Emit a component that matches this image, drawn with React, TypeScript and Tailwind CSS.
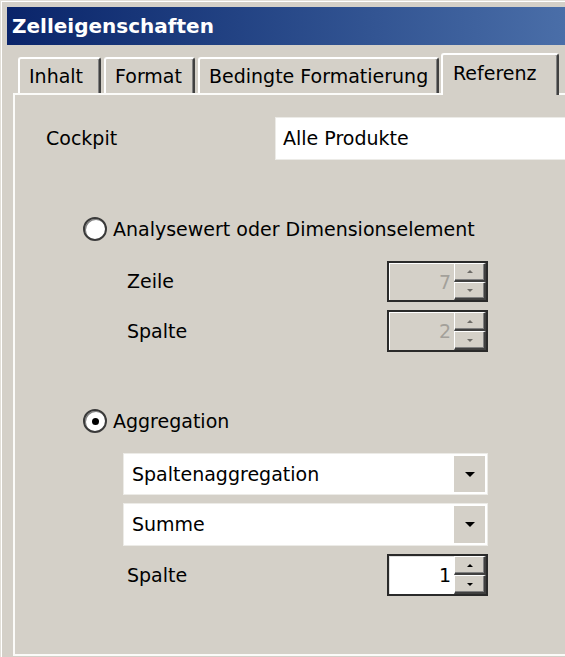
import type { FC, ReactNode } from 'react';
import { clsx } from 'clsx';

const Tab: FC<{ label: string; className: string; selected?: boolean }> = ({ label, className, selected }) => (
	<div
		className={clsx(
			'flex items-center rounded-t-[3px] border-l-2 border-r-2 border-t-2 border-l-white border-r-[#404040] border-t-white bg-[#d4d0c8] pl-[9px] shadow-[inset_-1px_0_0_#808080]',
			selected ? 'relative z-10 -mb-[2px] h-[42px] pb-[4px] pl-[10px]' : 'h-[36px]',
			className,
		)}
	>
		{label}
	</div>
);

const Radio: FC<{ checked?: boolean; children: ReactNode }> = ({ checked, children }) => (
	<div className="flex h-[24px] items-center">
		<div className="ml-[68px] flex size-[24px] items-center justify-center rounded-full border-2 border-[#3a3a3a] bg-white shadow-[inset_1px_1px_0_#808080]">
			{checked && <div className="size-[7px] rounded-full bg-black" />}
		</div>
		<span className="ml-[6px]">{children}</span>
	</div>
);

const SpinButton: FC<{ up?: boolean; disabled?: boolean }> = ({ up, disabled }) => (
	<div className="flex flex-1 items-center justify-center border-l border-t border-white border-b-2 border-r-2 border-b-[#404040] border-r-[#404040] bg-[#d4d0c8] shadow-[inset_-1px_-1px_0_#808080]">
		<div
			className={clsx(
				'border-x-[3px] border-x-transparent',
				up ? 'border-b-[3px]' : 'border-t-[3px]',
				up && (disabled ? 'border-b-[#6e6c68]' : 'border-b-black'),
				!up && (disabled ? 'border-t-[#6e6c68]' : 'border-t-black'),
			)}
		/>
	</div>
);

const SpinBox: FC<{ value: string; disabled?: boolean }> = ({ value, disabled }) => (
	<div className="flex h-full w-[101px] border-2 border-[#2a2a2a]">
		<div
			className={clsx(
				'flex flex-1 items-center justify-end border-l border-t pr-[3px]',
				disabled ? 'border-white bg-[#d4d0c8] text-[#a3a09a]' : 'border-[#e0e0e0] bg-white text-black',
			)}
		>
			{value}
		</div>
		<div className="flex w-[32px] flex-col bg-[#d4d0c8]">
			<SpinButton up disabled={disabled} />
			<SpinButton disabled={disabled} />
		</div>
	</div>
);

const Combo: FC<{ value: string }> = ({ value }) => (
	<div className="ml-[108px] flex h-full w-[365px] border border-[#ecebe7] bg-white p-[2px]">
		<div className="flex flex-1 items-center pl-[6px]">{value}</div>
		<div className="flex w-[31px] items-center justify-center bg-[#d4d0c8]">
			<div className="border-x-[5px] border-t-[5px] border-x-transparent border-t-black" />
		</div>
	</div>
);

const LabelRow: FC<{ label: string; value: string; disabled?: boolean; className: string }> = ({ label, value, disabled, className }) => (
	<div className={clsx('flex items-center', className)}>
		<span className="ml-[112px] w-[260px]">{label}</span>
		<SpinBox value={value} disabled={disabled} />
	</div>
);

export default function App() {
	return (
		<div className="h-[657px] w-[565px] overflow-hidden border-l border-t border-[#e2dfd8] bg-[#d4d0c8] font-['DejaVu_Sans',sans-serif] text-[19px] leading-none text-black">
			<div className="flex h-full flex-col border-l border-t border-white pb-[1px] pt-[5px]">
				<div className="ml-[5px] flex h-[38px] items-center bg-gradient-to-r from-[#0a246a] to-[#4a6ea8] pl-[5px] text-[20px] font-bold text-white">
					Zelleigenschaften
				</div>

				<div className="ml-[11px] mt-[8px] flex items-end">
					<Tab label="Inhalt" className="ml-[5px] w-[83px]" />
					<Tab label="Format" className="ml-[3px] w-[91px]" />
					<Tab label="Bedingte Formatierung" className="ml-[3px] w-[241px]" />
					<Tab label="Referenz" className="ml-[2px] w-[118px]" selected />
				</div>

				<div className="ml-[11px] flex w-[640px] flex-1 flex-col border-b-2 border-l-2 border-t-2 border-[#fbfbf9] pt-[22px]">
					<div className="flex h-[43px] items-center">
						<span className="ml-[31px] w-[229px]">Cockpit</span>
						<div className="flex h-full w-[320px] items-center border border-[#ecebe7] bg-white pl-[7px]">Alle Produkte</div>
					</div>

					<div className="mt-[57px]">
						<Radio>Analysewert oder Dimensionselement</Radio>
					</div>
					<LabelRow label="Zeile" value="7" disabled className="mt-[20px] h-[41px]" />
					<LabelRow label="Spalte" value="2" disabled className="mt-[8px] h-[42px]" />

					<div className="mt-[57px]">
						<Radio checked>Aggregation</Radio>
					</div>
					<div className="mt-[20px] h-[42px]">
						<Combo value="Spaltenaggregation" />
					</div>
					<div className="mt-[8px] h-[43px]">
						<Combo value="Summe" />
					</div>
					<LabelRow label="Spalte" value="1" className="mt-[8px] h-[42px]" />
				</div>
			</div>
		</div>
	);
}
